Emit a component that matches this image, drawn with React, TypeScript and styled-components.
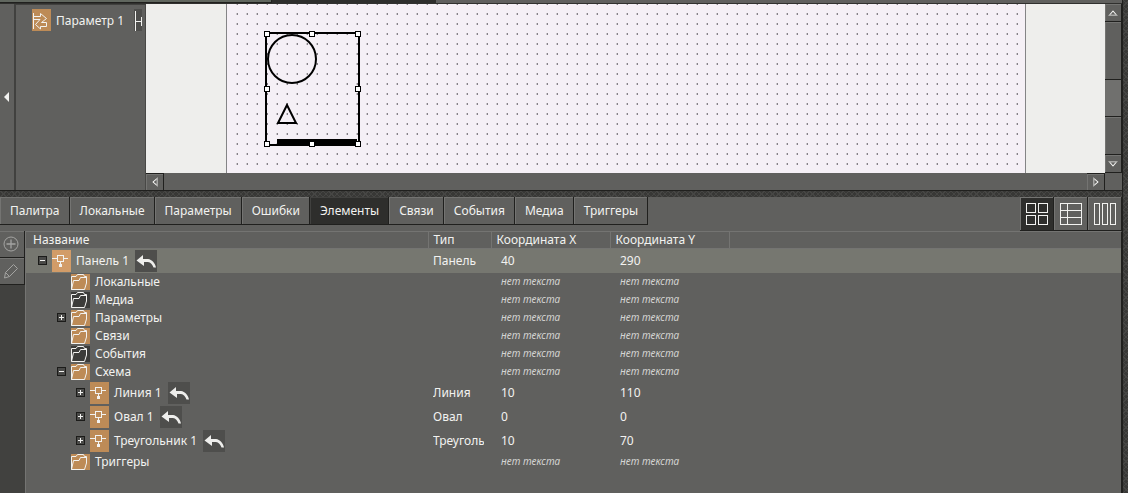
import React from 'react';
import styled, { createGlobalStyle, css } from 'styled-components';

const Global = createGlobalStyle`
  * { box-sizing: border-box; }
  html, body, #root { height: 100%; }
  body {
    margin: 0;
    background: #383836;
    color: #f2f2f0;
    font: 12px/16px "Noto Sans", "Open Sans", sans-serif;
    overflow: hidden;
  }
  button { font: inherit; color: inherit; cursor: pointer; }
  svg { display: block; flex: none; }
`;

const texture = css`
  background-color: #383836;
  background-image: repeating-linear-gradient(135deg, #464644 0 1px, transparent 1px 4px),
    repeating-linear-gradient(45deg, #464644 0 1px, transparent 1px 4px);
`;

const Shell = styled.div`
  display: grid;
  grid-template-columns: minmax(0, 1fr) 6px;
  height: 100%;
`;
const Edge = styled.div`
  ${texture}
  border-left: 1px solid #20201e;
`;
const Main = styled.main`
  display: flex;
  flex-direction: column;
  min-height: 0;
`;
const TopStrip = styled.div`
  display: flex;
  height: 4px;
  flex: none;
  background: #60605e;
  border-bottom: 1px solid #30302e;
`;
const TopTab = styled.div`
  width: 272px;
  background: #60665e;
  border-right: 1px solid #20201e;
  border-bottom: 1px solid #20201e;
`;
const TopTabActive = styled.div`
  width: 164px;
  background: #2e2e2c;
`;
const Editor = styled.section`
  display: flex;
  flex: none;
  height: 187px;
  border-bottom: 1px solid #20201e;
  background: #60605e;
`;
const Collapse = styled.button`
  display: flex;
  align-items: center;
  width: 16px;
  padding: 0 0 0 4px;
  border: 0;
  border-right: 2px solid #41413f;
  background: #60605e;
`;
const Params = styled.aside`
  display: flex;
  align-items: flex-start;
  width: 130px;
  padding: 4px 3px 0 16px;
  border-top: 1px solid #41413f;
  border-right: 1px solid #484846;
`;
const ParamName = styled.span`
  flex: 1;
  padding: 4px 0 0 5px;
  white-space: nowrap;
`;
const View = styled.div`
  flex: 1;
  min-width: 0;
  display: grid;
  grid-template-columns: minmax(0, 1fr) 17px;
  grid-template-rows: minmax(0, 1fr) 17px;
`;
const Canvas = styled.div`
  background: #eeeeec;
  padding: 0 79px 0 80px;
`;
const Sheet = styled.div`
  height: 100%;
  border: 0 solid #848486;
  border-width: 0 1px;
  background: #f5f0f6;
`;
const VBar = styled.div`
  display: flex;
  flex-direction: column;
  border-right: 1px solid #20201e;
`;
const HBar = styled.div`
  display: flex;
  justify-content: space-between;
`;
const Arrow = styled.button<{ $h?: boolean }>`
  display: flex;
  align-items: center;
  justify-content: center;
  width: ${p => (p.$h ? '18px' : '100%')};
  height: ${p => (p.$h ? '17px' : '18px')};
  flex: none;
  padding: 0;
  border: 0 solid #20201e;
  border-width: ${p => (p.$h ? '1px 1px 0 0' : '0 0 1px')};
  background: #60605e;
  box-shadow: inset 1px 1px #747472;
`;
const Track = styled.div<{ $grow: number }>`
  flex: ${p => p.$grow} 1 0;
  box-shadow: inset 1px 1px #747472;
`;
const Thumb = styled.div`
  height: 38px;
  background: #70706e;
  border: 1px solid #20201e;
  border-width: 1px 0;
`;
const TrackEnd = styled(Track)`
  border-bottom: 1px solid #20201e;
`;
const Splitter = styled.div`
  ${texture}
  height: 6px;
  flex: none;
`;
const Lower = styled.section`
  display: flex;
  flex: 1;
  flex-direction: column;
  min-height: 0;
  background: #60605e;
`;
const Toolbar = styled.div`
  display: flex;
  align-items: flex-start;
  height: 34px;
  flex: none;
`;
const Tab = styled.button<{ $on?: boolean }>`
  height: 28px;
  padding: 0 9px 0 10px;
  border: 0 solid #20201e;
  border-width: 0 1px 1px 0;
  background: ${p => (p.$on ? '#2e2e2c' : '#60605e')};
  box-shadow: inset 1px 1px ${p => (p.$on ? '#41413f' : '#747472')};
  white-space: nowrap;
`;
const Views = styled.div`
  display: flex;
  margin-left: auto;
`;
const ViewButton = styled.button<{ $on?: boolean }>`
  display: flex;
  align-items: center;
  justify-content: center;
  width: 34px;
  height: 34px;
  padding: 0;
  border: 0 solid #20201e;
  border-width: 0 1px 1px 0;
  background: ${p => (p.$on ? '#2e2e2c' : '#60605e')};
  box-shadow: inset 1px 1px #747472;
`;
const Body = styled.div`
  display: flex;
  flex: 1;
  min-height: 0;
`;
const Tools = styled.div`
  width: 25px;
  flex: none;
  background: #41413f;
`;
const Tool = styled.button`
  display: flex;
  align-items: center;
  justify-content: center;
  width: 25px;
  height: 27px;
  padding: 0 2px 0 0;
  border: 0 solid #20201e;
  border-width: 0 1px 1px 0;
  background: #60605e;
  box-shadow: inset 0 1px #747472;
`;
const Panel = styled.div`
  flex: 1;
  min-width: 0;
  border: 1px solid #747472;
  border-right-color: #20201e;
  border-bottom: 0;
`;
const Table = styled.table`
  width: 100%;
  table-layout: fixed;
  border-collapse: collapse;
`;
const Head = styled.th`
  height: 16px;
  padding: 0 0 0 5px;
  border: 1px solid #747472;
  border-width: 0 1px 1px 0;
  text-align: left;
  font-weight: normal;
  white-space: nowrap;
  &:first-child { padding-left: 7px; }
  &:last-child { border-right: 0; }
`;
const Row = styled.tr<{ $item?: boolean; $on?: boolean }>`
  height: ${p => (p.$item ? '24px' : '18px')};
  background: ${p => (p.$on ? '#767770' : 'transparent')};
`;
const NameCell = styled.td`
  padding: 0;
  white-space: nowrap;
`;
const TypeCell = styled.td`
  padding: 0 7px 0 5px;
`;
const TypeName = styled.div`
  overflow: hidden;
  white-space: nowrap;
`;
const Value = styled.td`
  padding: 0 0 0 10px;
  white-space: nowrap;
`;
const Empty = styled.em`
  display: block;
  padding-bottom: 2px;
  font-size: 10px;
  line-height: 14px;
  color: #d4d4d2;
`;
const Node = styled.div<{ $level: number }>`
  display: flex;
  align-items: center;
  padding-left: ${p => 12 + p.$level * 19}px;
`;
const ExpandSlot = styled.span`
  display: flex;
  width: 14px;
  flex: none;
`;
const Expand = styled.button`
  padding: 0;
  border: 0;
  background: none;
`;
const Label = styled.span`
  padding: 0 6px 0 5px;
`;
const Undo = styled.button`
  padding: 0;
  border: 0;
  background: #4e4e4c;
`;

const Dots = () => (
  <svg width="100%" height="169" shapeRendering="crispEdges" aria-hidden="true">
    <defs>
      <pattern id="dots" x="9" y="9" width="10" height="10" patternUnits="userSpaceOnUse">
        <path d="M0 0h1v2H0z" fill="#ccc8cd" />
        <path d="M1 0h1v2H1z" fill="#858086" />
      </pattern>
    </defs>
    <rect x="2" width="100%" height="100%" fill="url(#dots)" />
    <g fill="none" stroke="#000" strokeWidth="2">
      <path d="M39 29H132V141H39z" />
      <circle cx="65" cy="55" r="24" shapeRendering="auto" />
      <path d="M60 101L51 119H69z" shapeRendering="auto" />
    </g>
    <path d="M50 135H130V142H50z" />
    <g fill="#fff" stroke="#000">
      {[[40, 30], [85, 30], [131, 30], [40, 85], [131, 85], [40, 140], [85, 140], [131, 140]].map(([x, y]) => (
        <rect key={`${x}-${y}`} x={x - 2.5} y={y - 2.5} width="5" height="5" />
      ))}
    </g>
  </svg>
);

const ScrollArrow = ({ down }: { down?: boolean }) => (
  <svg width="10" height="6" viewBox="0 0 10 6">
    <g transform={down ? 'rotate(180 5 3)' : undefined}>
      <path d="M5 0L0 6H10z" fill="#a8a8a6" />
      <path d="M5 1L2 4.500M5 1L8 4.500" stroke="#f2f2f0" fill="none" />
      <path d="M5 2L3 4.500H7z" fill="#60605e" />
    </g>
  </svg>
);
const SideArrow = ({ right }: { right?: boolean }) => (
  <svg width="6" height="10" viewBox="0 0 6 10">
    <g transform={right ? 'rotate(180 3 5)' : undefined}>
      <path d="M0 5L6 0V10z" fill="#a8a8a6" />
      <path d="M1 5L4.500 2M1 5L4.500 8" stroke="#f2f2f0" fill="none" />
      <path d="M2 5L4.500 3V7z" fill="#60605e" />
    </g>
  </svg>
);

const FolderIcon = ({ dark }: { dark?: boolean }) => (
  <svg width="19" height="16" viewBox="0 0 19 16">
    <path d="M0 0H19V16H0z" fill={dark ? '#3c3c3a' : '#bd8b57'} />
    <path d="M.5 15.5V2.500H5L6.500 .5H12.500L13.500 2.500H15.500V9L13.500 15.500H.500L2.500 6.500H8L9.500 3.500H15.500" fill="none" stroke="#f2f2f0" />
  </svg>
);
const NodeIcon = ({ light }: { light?: boolean }) => (
  <svg width="19" height="22" viewBox="0 0 19 22" shapeRendering="crispEdges">
    <path d="M0 0H19V22H0z" fill={light ? '#d29c68' : '#bd8b57'} />
    <path d="M0 8.500H5.500M11.500 8.500H16M5.500 5.500H11.500V11.500H5.500zM8.500 12V15" fill="none" stroke="#f2f2f0" />
    <path d="M7 14H10V17H7z" fill="#f2f2f0" />
  </svg>
);
const UndoIcon = () => (
  <svg width="22" height="22" viewBox="0 0 22 22">
    <path d="M1.500 10.500L8 5V9H13C17 9.500 20 13 21 17.500H18.500C17.500 14.500 15.500 12 13 12H9V16z" fill="#eeeeec" />
  </svg>
);
const ExpandIcon = ({ open }: { open?: boolean }) => (
  <svg width="9" height="9" viewBox="0 0 9 9" shapeRendering="crispEdges">
    <rect x=".5" y=".5" width="8" height="8" fill="#4a4a48" stroke="#1c1c1a" />
    <path d={open ? 'M2 4.500H7' : 'M2 4.500H7M4.500 2V7'} stroke="#f2f2f0" />
  </svg>
);

type Item = {
  name: string;
  level: number;
  open?: boolean;
  dark?: boolean;
  type?: string;
  x?: number;
  y?: number;
};
const items: Item[] = [
  { name: 'Панель 1', level: 0, open: true, type: 'Панель', x: 40, y: 290 },
  { name: 'Локальные', level: 1 },
  { name: 'Медиа', level: 1, dark: true },
  { name: 'Параметры', level: 1, open: false },
  { name: 'Связи', level: 1 },
  { name: 'События', level: 1, dark: true },
  { name: 'Схема', level: 1, open: true },
  { name: 'Линия 1', level: 2, open: false, type: 'Линия', x: 10, y: 110 },
  { name: 'Овал 1', level: 2, open: false, type: 'Овал', x: 0, y: 0 },
  { name: 'Треугольник 1', level: 2, open: false, type: 'Треугольник', x: 10, y: 70 },
  { name: 'Триггеры', level: 1 },
];
const tabs = ['Палитра', 'Локальные', 'Параметры', 'Ошибки', 'Элементы', 'Связи', 'События', 'Медиа', 'Триггеры'];

export default function App() {
  return (
    <Shell>
      <Global />
      <Main>
        <TopStrip><TopTab /><TopTabActive /></TopStrip>
        <Editor>
          <Collapse aria-label="Свернуть">
            <svg width="5" height="10" viewBox="0 0 5 10"><path d="M0 5L5 0V10z" fill="#f2f2f0" /></svg>
          </Collapse>
          <Params>
            <svg width="19" height="22" viewBox="0 0 19 22">
              <path d="M0 0H19V22H0z" fill="#bd8b57" />
              <path d="M1.500 4V20M2 7.500H8.500V4.500L14.500 9.500L9.500 13.500H14.500V17.500H8.500V20L3.500 15.500L8 10.500H2" fill="none" stroke="#f2f2f0" />
            </svg>
            <ParamName>Параметр 1</ParamName>
            <svg width="8" height="22" viewBox="0 0 8 22" shapeRendering="crispEdges">
              <path d="M0 0H8V22H0z" fill="#4e4e4c" />
              <path d="M1.500 2V22M2 12.500H7M7.500 8V17" stroke="#f2f2f0" />
            </svg>
          </Params>
          <View>
            <Canvas><Sheet><Dots /></Sheet></Canvas>
            <VBar>
              <Arrow aria-label="Вверх"><ScrollArrow /></Arrow>
              <Track $grow={58} /><Thumb /><TrackEnd $grow={37} />
              <Arrow aria-label="Вниз"><ScrollArrow down /></Arrow>
            </VBar>
            <HBar>
              <Arrow $h aria-label="Влево"><SideArrow /></Arrow>
              <Arrow $h aria-label="Вправо"><SideArrow right /></Arrow>
            </HBar>
          </View>
        </Editor>
        <Splitter />
        <Lower>
          <Toolbar>
            {tabs.map(t => <Tab key={t} $on={t === 'Элементы'}>{t}</Tab>)}
            <Views>
              <ViewButton $on aria-label="Плитка">
                <svg width="22" height="22" viewBox="0 0 22 22" shapeRendering="crispEdges" fill="none" stroke="#f2f2f0">
                  <path d="M.5 .5H9.500V9.500H.5zM12.500 .5H21.500V9.500H12.500zM.5 12.500H9.500V21.500H.5zM12.500 12.500H21.500V21.500H12.500z" />
                </svg>
              </ViewButton>
              <ViewButton aria-label="Таблица">
                <svg width="22" height="22" viewBox="0 0 22 22" shapeRendering="crispEdges" fill="none" stroke="#f2f2f0">
                  <path d="M.5 .5H21.500V21.500H.5zM.5 7.500H21.500M.5 14.500H21.500M7.500 .5V21.500" />
                </svg>
              </ViewButton>
              <ViewButton aria-label="Столбцы">
                <svg width="22" height="22" viewBox="0 0 22 22" shapeRendering="crispEdges" fill="none" stroke="#f2f2f0">
                  <path d="M.5 .5H5.500V21.500H.5zM8.500 .5H13.500V21.500H8.500zM16.500 .5H21.500V21.500H16.500z" />
                </svg>
              </ViewButton>
            </Views>
          </Toolbar>
          <Body>
            <Tools>
              <Tool aria-label="Добавить">
                <svg width="16" height="16" viewBox="0 0 16 16" fill="none" stroke="#a4a4a2">
                  <circle cx="8" cy="8" r="7" /><path d="M8 3.500V12.500M3.500 8H12.500" strokeWidth="1.3" />
                </svg>
              </Tool>
              <Tool aria-label="Изменить">
                <svg width="16" height="16" viewBox="0 0 16 16" fill="none" stroke="#a4a4a2">
                  <path d="M1.500 15L2.500 9.500L10.500 1.500L14.500 5.500L6.500 13.500zM2.500 9.500L6.500 13.500" />
                </svg>
              </Tool>
            </Tools>
            <Panel>
              <Table>
                <colgroup>
                  <col width="402" /><col width="63" /><col width="119" /><col width="119" /><col />
                </colgroup>
                <thead>
                  <tr><Head>Название</Head><Head>Тип</Head><Head>Координата X</Head><Head>Координата Y</Head><Head aria-hidden="true" /></tr>
                </thead>
                <tbody>
                  {items.map(i => {
                    const item = i.type !== undefined;
                    return (
                      <Row key={i.name} $item={item} $on={i.level === 0}>
                        <NameCell>
                          <Node $level={i.level}>
                            <ExpandSlot>
                              {i.open !== undefined && (
                                <Expand aria-label="Развернуть" aria-expanded={i.open}><ExpandIcon open={i.open} /></Expand>
                              )}
                            </ExpandSlot>
                            {item ? <NodeIcon light={i.level === 0} /> : <FolderIcon dark={i.dark} />}
                            <Label>{i.name}</Label>
                            {item && <Undo aria-label="Вернуть"><UndoIcon /></Undo>}
                          </Node>
                        </NameCell>
                        <TypeCell><TypeName>{i.type}</TypeName></TypeCell>
                        <Value>{i.x ?? <Empty>нет текста</Empty>}</Value>
                        <Value>{i.y ?? <Empty>нет текста</Empty>}</Value>
                        <td />
                      </Row>
                    );
                  })}
                </tbody>
              </Table>
            </Panel>
          </Body>
        </Lower>
      </Main>
      <Edge />
    </Shell>
  );
}
